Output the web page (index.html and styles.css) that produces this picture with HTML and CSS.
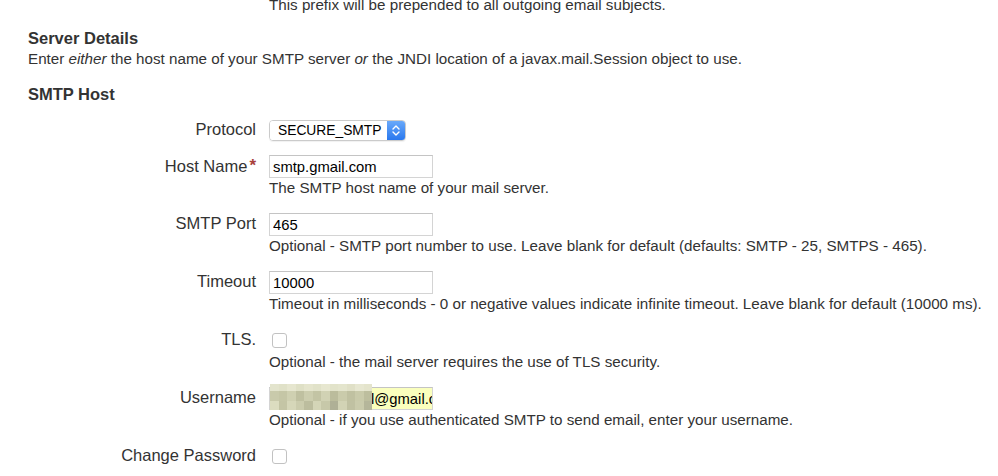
FILE: index.html
```html
<!DOCTYPE html>
<html lang="en">
<head>
    <meta charset="UTF-8">
    <meta name="viewport" content="width=device-width, initial-scale=1.0">
    <title>Mail Server</title>
    <link rel="stylesheet" href="styles.css">
</head>
<body>
    <div class="page">
        <p class="prefix-note">This prefix will be prepended to all outgoing email subjects.</p>

        <h3 class="section-title">Server Details</h3>
        <p class="section-desc">Enter <em>either</em> the host name of your SMTP server <em>or</em> the JNDI location of a javax.mail.Session object to use.</p>

        <h3 class="group-title">SMTP Host</h3>

        <form class="form">
            <div class="row row-select">
                <label for="protocol">Protocol</label>
                <div class="field">
                    <div class="select">
                        <select id="protocol" name="protocol">
                            <option>SECURE_SMTP</option>
                            <option>SMTP</option>
                        </select>
                        <span class="stepper">
                            <svg width="8" height="13" viewBox="0 0 8 13">
                                <path d="M1 5 L4 2 L7 5 M1 8 L4 11 L7 8" fill="none" stroke="#fff" stroke-width="1.4" stroke-linecap="round" stroke-linejoin="round"/>
                            </svg>
                        </span>
                    </div>
                </div>
            </div>

            <div class="row">
                <label for="host">Host Name<span class="req">*</span></label>
                <div class="field">
                    <input type="text" id="host" value="smtp.gmail.com">
                    <div class="desc">The SMTP host name of your mail server.</div>
                </div>
            </div>

            <div class="row">
                <label for="port">SMTP Port</label>
                <div class="field">
                    <input type="text" id="port" value="465">
                    <div class="desc">Optional - SMTP port number to use. Leave blank for default (defaults: SMTP - 25, SMTPS - 465).</div>
                </div>
            </div>

            <div class="row">
                <label for="timeout">Timeout</label>
                <div class="field">
                    <input type="text" id="timeout" value="10000">
                    <div class="desc">Timeout in milliseconds - 0 or negative values indicate infinite timeout. Leave blank for default (10000 ms).</div>
                </div>
            </div>

            <div class="row">
                <label for="tls">TLS.</label>
                <div class="field">
                    <div class="check-line"><input type="checkbox" id="tls"></div>
                    <div class="desc">Optional - the mail server requires the use of TLS security.</div>
                </div>
            </div>

            <div class="row">
                <label for="username">Username</label>
                <div class="field">
                    <div class="masked">
                        <input type="text" id="username" class="autofill" value="l@gmail.com">
                        <div class="blur">
                            <span style="background:#e3e4cd"></span><span style="background:#e0e1c8"></span><span style="background:#e6e6cf"></span><span style="background:#dfe0c6"></span><span style="background:#e5e5cd"></span><span style="background:#e1e2c9"></span><span style="background:#e7e7d0"></span><span style="background:#e2e3ca"></span><span style="background:#e4e5cd"></span><span style="background:#e0e0c7"></span><span style="background:#e7e7d1"></span><span style="background:#e4e4cc"></span>
                            <span style="background:#c9caab"></span><span style="background:#c5c6a6"></span><span style="background:#cfd0b1"></span><span style="background:#bfc0a0"></span><span style="background:#cccdae"></span><span style="background:#c3c4a4"></span><span style="background:#d1d2b4"></span><span style="background:#bbbc9c"></span><span style="background:#cacbab"></span><span style="background:#c0c1a1"></span><span style="background:#c9caaa"></span><span style="background:#bdbe9e"></span>
                            <span style="background:#dcddc0"></span><span style="background:#c4c5a5"></span><span style="background:#d6d7b9"></span><span style="background:#cbccad"></span><span style="background:#bcbd9e"></span><span style="background:#d4d5b7"></span><span style="background:#c7c8a9"></span><span style="background:#afb096"></span><span style="background:#d2d3b5"></span><span style="background:#c0c1a2"></span><span style="background:#cacbac"></span><span style="background:#b5b69a"></span>
                        </div>
                    </div>
                    <div class="desc">Optional - if you use authenticated SMTP to send email, enter your username.</div>
                </div>
            </div>

            <div class="row">
                <label for="changepw">Change Password</label>
                <div class="field">
                    <div class="check-line"><input type="checkbox" id="changepw"></div>
                </div>
            </div>
        </form>
    </div>
</body>
</html>
```

FILE: styles.css
```css
body {
    margin: 0;
    font-family: "Liberation Sans", Arial, sans-serif;
    color: #333;
    background: #fff;
    overflow: hidden;
}
.page {
    padding-left: 28px;
}
.prefix-note {
    margin: -4px 0 0 241px;
    font-size: 15.2px;
    line-height: 18px;
}
.section-title,
.group-title {
    margin: 0;
    font-size: 16.5px;
    line-height: 20px;
    font-weight: bold;
}
.section-title {
    margin-top: 14px;
}
.section-desc {
    margin: 2px 0 0;
    font-size: 15.2px;
    line-height: 18px;
}
.group-title {
    margin-top: 16px;
}
.form {
    margin-top: 15px;
}
.row {
    display: grid;
    grid-template-columns: 228px 1fr;
    column-gap: 13px;
    margin-bottom: 16px;
}
.row-select {
    margin-bottom: 13px;
}
.row label {
    text-align: right;
    font-size: 16.5px;
    line-height: 21px;
    height: 23px;
}
.req {
    color: #a8413c;
    font-size: 17px;
    font-weight: bold;
    margin-left: 2px;
    vertical-align: 1px;
}
.field input[type="text"] {
    box-sizing: border-box;
    width: 164px;
    height: 23px;
    margin: 0;
    padding: 1px 3px 0;
    border: 1px solid #d4d4d4;
    border-top-color: #c4c4c4;
    font-family: "Liberation Sans", Arial, sans-serif;
    font-size: 14.8px;
    color: #000;
    display: block;
    outline: none;
}
.desc {
    font-size: 15.2px;
    line-height: 18px;
    margin-top: 1px;
}
.select {
    display: flex;
    width: 137px;
    height: 21px;
    margin-top: 1px;
    box-sizing: border-box;
    border: 1px solid #cbcbcb;
    border-radius: 4px;
    overflow: hidden;
    box-shadow: 0 1px 1px rgba(0, 0, 0, 0.06);
}
.select select {
    flex: 1;
    appearance: none;
    -webkit-appearance: none;
    border: none;
    background: #fff;
    padding: 0 0 0 8px;
    margin: 0;
    font-family: "Liberation Sans", Arial, sans-serif;
    font-size: 13.8px;
    color: #000;
    outline: none;
}
.stepper {
    width: 18px;
    display: flex;
    align-items: center;
    justify-content: center;
    background: linear-gradient(#69a9fa, #2a78ee);
}
.check-line {
    height: 23px;
    display: flex;
    align-items: center;
}
.check-line input {
    appearance: none;
    -webkit-appearance: none;
    width: 15px;
    height: 15px;
    margin: 0 0 0 3px;
    border: 1px solid #c2c2c2;
    border-radius: 3px;
    background: #fff;
    box-sizing: border-box;
}
.masked {
    position: relative;
    width: 164px;
}
.field input.autofill {
    background: #faffbd;
    padding-left: 101px;
    padding-right: 0;
}
.blur {
    position: absolute;
    left: 1px;
    top: -3px;
    width: 102px;
    height: 26px;
    display: grid;
    grid-template-columns: repeat(12, 1fr);
    grid-template-rows: 7px 10px 9px;
}
```
